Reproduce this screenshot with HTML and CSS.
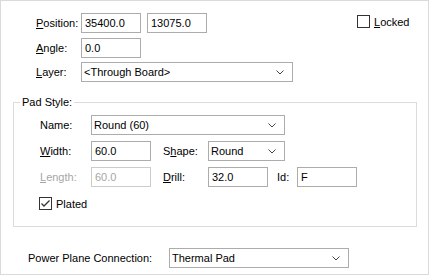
FILE: index.html
```html
<!DOCTYPE html>
<html>
  <head>
    <title>Pad Properties</title>
    <link rel="stylesheet" href="styles.css">
  </head>
  <body>
    <div class="dialog">
      <div class="row first">
        <span class="label lbl-top"><u>P</u>osition:</span>
        <input class="field" value="35400.0" />
        <input class="field second" value="13075.0" />
        <label class="check locked">
          <span class="box"></span>
          <span><u>L</u>ocked</span>
        </label>
      </div>
      <div class="row angle">
        <span class="label lbl-top"><u>A</u>ngle:</span>
        <input class="field" value="0.0" />
      </div>
      <div class="row layer">
        <span class="label lbl-top"><u>L</u>ayer:</span>
        <div class="combo combo-layer">
          <span>&lt;Through Board&gt;</span>
          <svg class="arrow" width="8" height="5" viewBox="0 0 8 5"><polyline points="0.5,0.5 4,4 7.5,0.5" /></svg>
        </div>
      </div>

      <div class="group">
        <span class="group-title">Pad Style:</span>
        <div class="row name">
          <span class="label lbl-pad">Name:</span>
          <div class="combo combo-name">
            <span>Round (60)</span>
            <svg class="arrow" width="8" height="5" viewBox="0 0 8 5"><polyline points="0.5,0.5 4,4 7.5,0.5" /></svg>
          </div>
        </div>
        <div class="row">
          <span class="label lbl-pad"><u>W</u>idth:</span>
          <input class="field" value="60.0" />
          <span class="label lbl-mid">S<u>h</u>ape:</span>
          <div class="combo combo-shape">
            <span>Round</span>
            <svg class="arrow" width="8" height="5" viewBox="0 0 8 5"><polyline points="0.5,0.5 4,4 7.5,0.5" /></svg>
          </div>
        </div>
        <div class="row">
          <span class="label lbl-pad disabled"><u>L</u>ength:</span>
          <input class="field" value="60.0" disabled />
          <span class="label lbl-mid"><u>D</u>rill:</span>
          <input class="field" value="32.0" />
          <span class="label lbl-id">Id:</span>
          <input class="field" value="F" />
        </div>
        <label class="check plated">
          <span class="box">
            <svg width="11" height="11" viewBox="0 0 11 11"><polyline points="1.5,5.5 4,8 9.5,2.5" /></svg>
          </span>
          <span>Plated</span>
        </label>
      </div>

      <div class="row power">
        <span class="label lbl-power">Power Plane Connection:</span>
        <div class="combo combo-power">
          <span>Thermal Pad</span>
          <svg class="arrow" width="8" height="5" viewBox="0 0 8 5"><polyline points="0.5,0.5 4,4 7.5,0.5" /></svg>
        </div>
      </div>
    </div>
  </body>
</html>
```

FILE: styles.css
```css
body {
  margin: 0;
  background: #fff;
  font-family: "Liberation Sans", Arial, sans-serif;
  font-size: 11px;
  color: #000;
}
u {
  text-decoration-thickness: 1px;
  text-underline-offset: 1px;
}
.dialog {
  width: 429px;
  height: 275px;
  box-sizing: border-box;
  border: 1px solid #dadada;
  padding-top: 12px;
}
.row {
  display: flex;
  align-items: center;
  height: 20px;
}
.label {
  flex: none;
  white-space: nowrap;
}
.lbl-top {
  width: 45px;
  margin-left: 35px;
}
.angle {
  margin-top: 5px;
}
.layer {
  margin-top: 4px;
}

.field {
  flex: none;
  width: 60px;
  height: 20px;
  box-sizing: border-box;
  margin: 0;
  padding: 0 3px;
  border: 1px solid #acacac;
  background: #fff;
  font: inherit;
  color: #000;
  outline: none;
}
.field:disabled {
  border-color: #cccccc;
  color: #a6a6a6;
}
.second {
  margin-left: 6px;
}

.combo {
  flex: none;
  display: flex;
  align-items: center;
  justify-content: space-between;
  height: 20px;
  box-sizing: border-box;
  padding: 0 8px 0 2px;
  border: 1px solid #acacac;
  background: #fff;
}
.arrow polyline {
  fill: none;
  stroke: #444;
  stroke-width: 1;
}
.combo-layer {
  width: 212px;
}

.check {
  display: flex;
  align-items: center;
  gap: 4px;
}
.box {
  width: 13px;
  height: 13px;
  box-sizing: border-box;
  border: 1px solid #333;
  background: #fff;
  flex: none;
}
.box svg {
  display: block;
}
.box polyline {
  fill: none;
  stroke: #333;
  stroke-width: 1.3;
}
.locked {
  align-self: flex-start;
  margin: 2px 0 0 150px;
}

.group {
  width: 404px;
  height: 125px;
  box-sizing: border-box;
  margin: 20px 0 0 12px;
  border: 1px solid #dcdcdc;
}
.group-title {
  display: block;
  width: fit-content;
  height: 13px;
  line-height: 13px;
  margin: -7px 0 0 6px;
  padding: 0 2px;
  background: #fff;
}
.group .row {
  margin-top: 6px;
}
.lbl-pad {
  width: 51px;
  margin-left: 26px;
}
.lbl-mid {
  width: 45px;
  margin-left: 12px;
}
.lbl-id {
  width: 20px;
  margin-left: 9px;
}
.disabled {
  color: #a6a6a6;
}
.combo-name {
  width: 194px;
}
.combo-shape {
  width: 77px;
}
.plated {
  margin: 10px 0 0 25px;
}

.power {
  margin-top: 21px;
}
.lbl-power {
  width: 141px;
  margin-left: 27px;
}
.combo-power {
  width: 180px;
}
```
